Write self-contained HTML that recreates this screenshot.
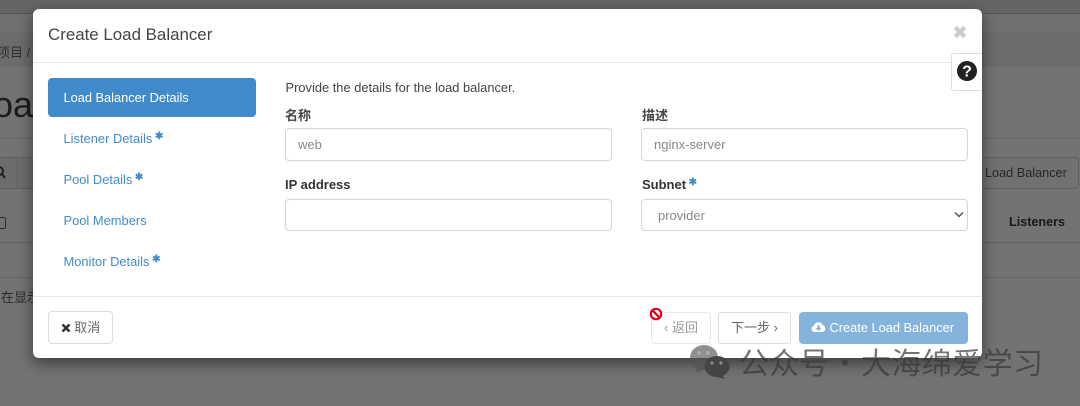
<!DOCTYPE html>
<html><head><meta charset="utf-8">
<style>
html,body{margin:0;padding:0;width:1080px;height:406px;overflow:hidden;background:#737373}
body{font-family:"Liberation Sans","Noto Sans CJK SC",sans-serif;font-size:13px;color:#333}
#w{position:absolute;left:0;top:0;width:1080px;height:406px;overflow:hidden;background:#737373;filter:blur(.3px)}
.a{position:absolute;white-space:nowrap}
.bg{position:absolute}
#m{position:absolute;left:33px;top:9px;width:949px;height:349px;background:#fff;border-radius:6px;box-shadow:0 5px 15px rgba(0,0,0,.5)}
.in{position:absolute;box-sizing:border-box;width:327px;background:#fff;border:1px solid #d4d4d4;border-radius:4px;color:#888;font-size:13px;padding-left:12px}
.l{position:absolute;font-weight:bold;font-size:13px;color:#333;white-space:nowrap}
.nav{position:absolute;color:#428bca;font-size:12.9px;white-space:nowrap}
.st{color:#428bca;font-size:10px;font-weight:bold;position:relative;top:-4px;margin-left:-1px}
.btn{position:absolute;box-sizing:border-box;border:1px solid #dcdcdc;border-radius:4px;background:#fff;text-align:center;color:#666;font-size:13px;white-space:nowrap}
.wm{position:absolute;font-size:30px;line-height:30px;color:#383838;opacity:.7;font-family:"Noto Sans CJK SC",sans-serif;font-weight:400;white-space:nowrap}
</style></head><body><div id="w">
<div class="bg" style="left:0;top:0;width:1080px;height:13px;background:#656565"></div>
<div class="bg" style="left:0;top:13px;width:1080px;height:1px;background:#555"></div>
<div class="bg" style="left:0;top:14px;width:1080px;height:19px;background:#707070"></div>
<div class="bg" style="left:0;top:33px;width:1080px;height:34px;background:#6c6c6c"></div>
<div class="bg" style="left:0;top:138px;width:1080px;height:1px;background:#686868"></div>
<div class="bg" style="left:0;top:157px;width:33px;height:30px;background:#6d6d6d;border-top:1px solid #606060;border-bottom:1px solid #606060"></div>
<div class="bg" style="left:17px;top:157px;width:1px;height:30px;background:#606060"></div>
<div class="bg" style="left:982px;top:157px;width:97px;height:32px;box-sizing:border-box;border:1px solid #606060;border-left:0;border-radius:0 4px 4px 0;background:#717171"></div>
<div class="bg" style="left:0;top:242px;width:1080px;height:1px;background:#626262"></div>
<div class="bg" style="left:0;top:277px;width:1080px;height:1px;background:#656565"></div>
<div class="a" style="left:-3px;top:42px;font-size:13px;color:#2f2f2f">项目 /</div>
<div class="a" style="left:-27px;top:84px;font-size:36px;color:#1c1c1c">Load</div>
<svg class="a" style="left:-3px;top:166px" width="10" height="14" viewBox="0 0 10 14"><circle cx="2" cy="5" r="4" fill="none" stroke="#222" stroke-width="2"/><path d="M5 8l3 4" stroke="#222" stroke-width="2"/></svg>
<div class="bg" style="left:-6px;top:217px;width:10px;height:10px;border:1px solid #2f2f2f;border-radius:2px"></div>
<div class="a" style="left:1px;top:287px;font-size:13px;color:#2a2a2a">在显示</div>
<div class="a" style="left:985px;top:166px;font-size:12.7px;color:#262626">Load Balancer</div>
<div class="a" style="left:1009px;top:215px;font-size:12.6px;font-weight:bold;color:#181818">Listeners</div>

<div id="m"></div>
<div class="bg" style="left:33px;top:62px;width:949px;height:1px;background:#e8e8e8"></div>
<div class="bg" style="left:33px;top:296px;width:949px;height:1px;background:#e8e8e8"></div>
<div class="a" style="left:48px;top:25px;font-size:16.9px;color:#444">Create Load Balancer</div>
<svg class="a" style="left:953px;top:25px" width="14" height="14" viewBox="0 0 14 14"><path d="M2.300 2.300l9.400 9.400M11.700 2.300l-9.400 9.400" stroke="#c8c8c8" stroke-width="4"/></svg>
<div class="bg" style="left:951px;top:53px;width:31px;height:38px;box-sizing:border-box;background:#fff;border:1px solid #ddd;border-right:0;border-radius:3px 0 0 3px"></div>
<svg class="a" style="left:957px;top:61px" width="20" height="20" viewBox="0 0 20 20"><circle cx="10" cy="10" r="10" fill="#222"/><text x="10" y="15.500" text-anchor="middle" font-family="Liberation Sans" font-weight="bold" font-size="16" fill="#fff">?</text></svg>

<div class="bg" style="left:48px;top:78px;width:208px;height:39px;background:#428bca;border-radius:4px"></div>
<div class="a" style="left:63.500px;top:90px;color:#fff;font-size:12.800px">Load Balancer Details</div>
<div class="a nav" style="left:63.500px;top:131px">Listener Details <span class="st">✱</span></div>
<div class="a nav" style="left:63.500px;top:172px">Pool Details <span class="st">✱</span></div>
<div class="a nav" style="left:63.500px;top:213px">Pool Members</div>
<div class="a nav" style="left:63.500px;top:254px">Monitor Details <span class="st">✱</span></div>

<div class="a" style="left:285.500px;top:80px;color:#444;font-size:12.880px">Provide the details for the load balancer.</div>
<div class="l" style="left:285px;top:105px;color:#444">名称</div>
<div class="l" style="left:642px;top:105px;color:#444">描述</div>
<div class="in" style="left:285px;top:128px;height:33px;line-height:31px">web</div>
<div class="in" style="left:641px;top:128px;height:33px;line-height:31px">nginx-server</div>
<div class="l" style="left:285px;top:177px">IP address</div>
<div class="l" style="left:642px;top:177px">Subnet <span class="st">✱</span></div>
<div class="in" style="left:285px;top:199px;height:32px"></div>
<div class="in" style="left:641px;top:199px;height:32px;line-height:31px;padding-left:16px">provider</div>
<svg class="a" style="left:954px;top:211px" width="10" height="8" viewBox="0 0 10 8"><path d="M1 1.500l4 4 4-4" fill="none" stroke="#555" stroke-width="1.500"/></svg>

<div class="btn" style="left:48px;top:311px;width:65px;height:33px;line-height:31px"><svg width="10" height="10" viewBox="0 0 10 10" style="vertical-align:-1px"><path d="M1.500 1.500l7 7M8.500 1.500l-7 7" stroke="#333" stroke-width="2.600"/></svg> 取消</div>
<div class="btn" style="left:651px;top:312px;width:60px;height:32px;line-height:30px;color:#999;border-color:#e8e8e8">‹ 返回</div>
<div class="btn" style="left:718px;top:312px;width:73px;height:32px;line-height:30px">下一步 ›</div>
<div class="btn" style="left:799px;top:312px;width:169px;height:32px;line-height:30px;background:#84b3dc;border-color:#84b3dc;color:#fff;font-size:12.800px;padding-right:2px"><svg width="15" height="12" viewBox="0 0 15 12" style="vertical-align:-1px"><path d="M3.500 11a3.200 3.200 0 0 1-.5-6.300A4.500 4.500 0 0 1 11.500 4 3.600 3.600 0 0 1 11.500 11z" fill="#fff"/><path d="M6.200 4.500h2.600v2.500h1.700L7.500 10 4.500 7h1.700z" fill="#84b3dc"/></svg> Create Load Balancer</div>
<svg class="a" style="left:649px;top:307px" width="14" height="14" viewBox="0 0 14 14"><circle cx="7" cy="7" r="5.200" fill="#fff" stroke="#e0001b" stroke-width="2.200"/><path d="M3.300 3.300l7.400 7.400" stroke="#e0001b" stroke-width="2.200"/></svg>

<svg class="a" style="left:689px;top:344px" width="42" height="35" viewBox="0 0 42 35"><ellipse cx="15" cy="13.500" rx="14" ry="12.500" fill="#555" opacity=".65"/><path d="M7 22l1 7 7-5z" fill="#555" opacity=".65"/><ellipse cx="28" cy="22.500" rx="12.500" ry="10.500" fill="#444"/><path d="M33 31l3 4-8-2z" fill="#444"/><circle cx="10" cy="9" r="1.900" fill="#aaa"/><circle cx="19" cy="9" r="1.900" fill="#aaa"/><circle cx="23" cy="19" r="1.600" fill="#8a8a8a"/><circle cx="32" cy="19" r="1.600" fill="#8a8a8a"/></svg>
<div class="wm" style="left:739px;top:346px">公众号</div>
<div class="wm" style="left:830px;top:346px">·</div>
<div class="wm" style="left:861px;top:346px;letter-spacing:.4px">大海绵爱学习</div>
</div></body></html>
